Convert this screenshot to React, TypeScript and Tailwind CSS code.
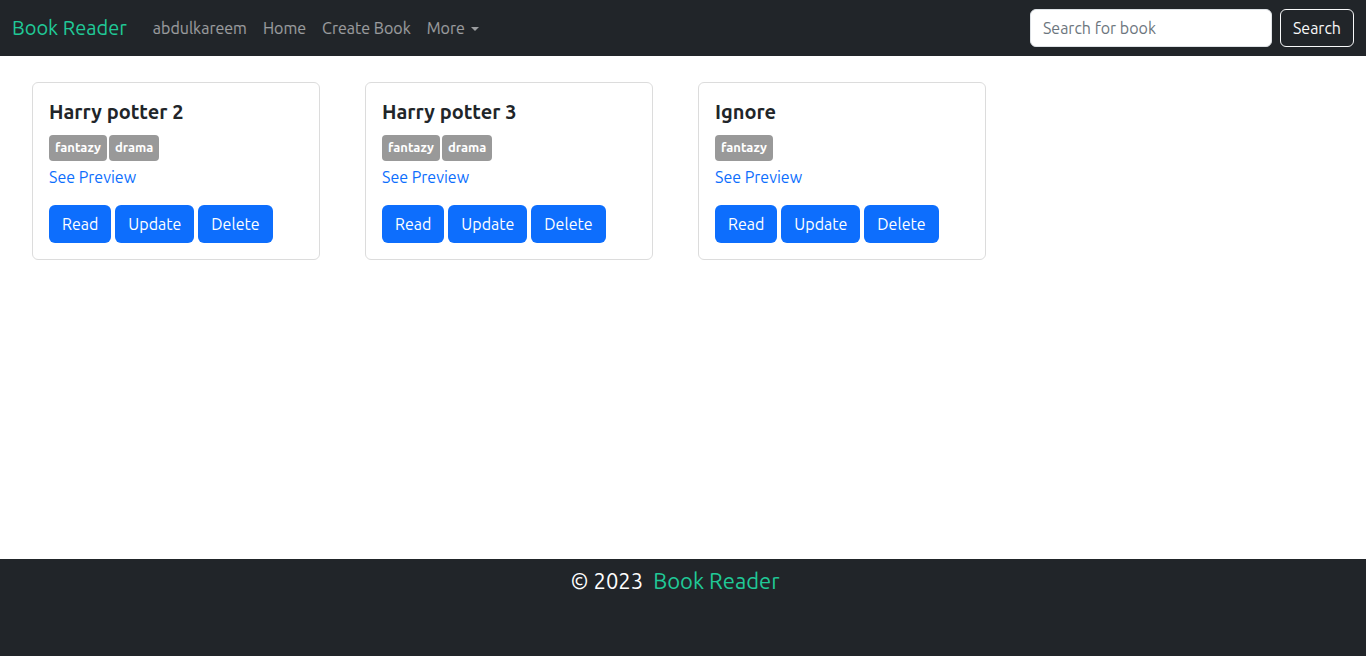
import { useState } from "react";

type Book = {
  id:    number;
  title: string;
  tags:  string[];
};

const BOOKS: Book[] = [
  { id: 1, title: "Harry potter 2", tags: ["fantazy", "drama"] },
  { id: 2, title: "Harry potter 3", tags: ["fantazy", "drama"] },
  { id: 3, title: "Ignore",         tags: ["fantazy"] },
];

const FONT = "font-['Ubuntu','Noto_Sans','Open_Sans',sans-serif]";

function Navbar() {
  const [query, setQuery] = useState("");

  return (
    <nav className="bg-[#212529] h-[56px] flex items-center justify-between pl-3 pr-3">
      <div className="flex items-center">
        <a href="#" className="text-[20px] text-[#20c997] mr-[18px] leading-[30px]">
          Book Reader
        </a>
        <div className="flex items-center text-[16px] text-white/55">
          <a href="#" className="px-2">abdulkareem</a>
          <a href="#" className="px-2">Home</a>
          <a href="#" className="px-2">Create Book</a>
          <a href="#" className="px-2 flex items-center">
            More
            {/* caret */}
            <span className="ml-[6px] mt-[1px] w-0 h-0 border-x-[4px] border-x-transparent border-t-[4px] border-t-white/55" />
          </a>
        </div>
      </div>

      {/* Search */}
      <form className="flex items-center gap-2" onSubmit={(e) => e.preventDefault()}>
        <input
          type="search"
          value={query}
          onChange={(e) => setQuery(e.target.value)}
          placeholder="Search for book"
          className="w-[242px] h-[38px] rounded-[6px] bg-white border border-[#dee2e6] px-3 text-[16px] text-[#212529] placeholder:text-[#6c757d] outline-none"
        />
        <button className="h-[38px] px-3 rounded-[6px] border border-[#f8f9fa] text-[16px] text-[#f8f9fa]">
          Search
        </button>
      </form>
    </nav>
  );
}

function BookCard({ book }: { book: Book }) {
  return (
    <div className="w-[288px] border border-[#dcdcdc] rounded-[6px] bg-white">
      <div className="p-4">
        <h5 className="text-[20px] font-semibold text-[#212529] leading-[24px] mt-[1px] mb-[11px]">
          {book.title}
        </h5>
        <div className="flex gap-[2px]">
          {book.tags.map((t) => (
            <span
              key={t}
              className="h-[26px] px-[6px] flex items-center rounded-[4px] bg-[#999999] text-white text-[13px] font-semibold"
            >
              {t}
            </span>
          ))}
        </div>
        <a href="#" className="block text-[16px] text-[#0d6efd] leading-[24px] mt-[4px] mb-[16px]">
          See Preview
        </a>
        <div className="flex gap-[4px]">
          {["Read", "Update", "Delete"].map((label) => (
            <button
              key={label}
              className="h-[38px] px-[13px] rounded-[6px] bg-[#0d6efd] text-white text-[16px]"
            >
              {label}
            </button>
          ))}
        </div>
      </div>
    </div>
  );
}

export default function App() {
  return (
    <div className={`min-h-screen flex flex-col bg-white ${FONT}`}>
      <Navbar />

      <main className="flex-1 flex items-start gap-[45px] pl-[32px] pt-[26px]">
        {BOOKS.map((b) => (
          <BookCard key={b.id} book={b} />
        ))}
      </main>

      <footer className="bg-[#212529] h-[97px] flex justify-center pt-[5px] pr-[16px]">
        <p className="text-[22px] leading-[33px] text-white">
          © 2023{"\u00a0 "}
          <a href="#" className="text-[#20c997]">Book Reader</a>
        </p>
      </footer>
    </div>
  );
}
